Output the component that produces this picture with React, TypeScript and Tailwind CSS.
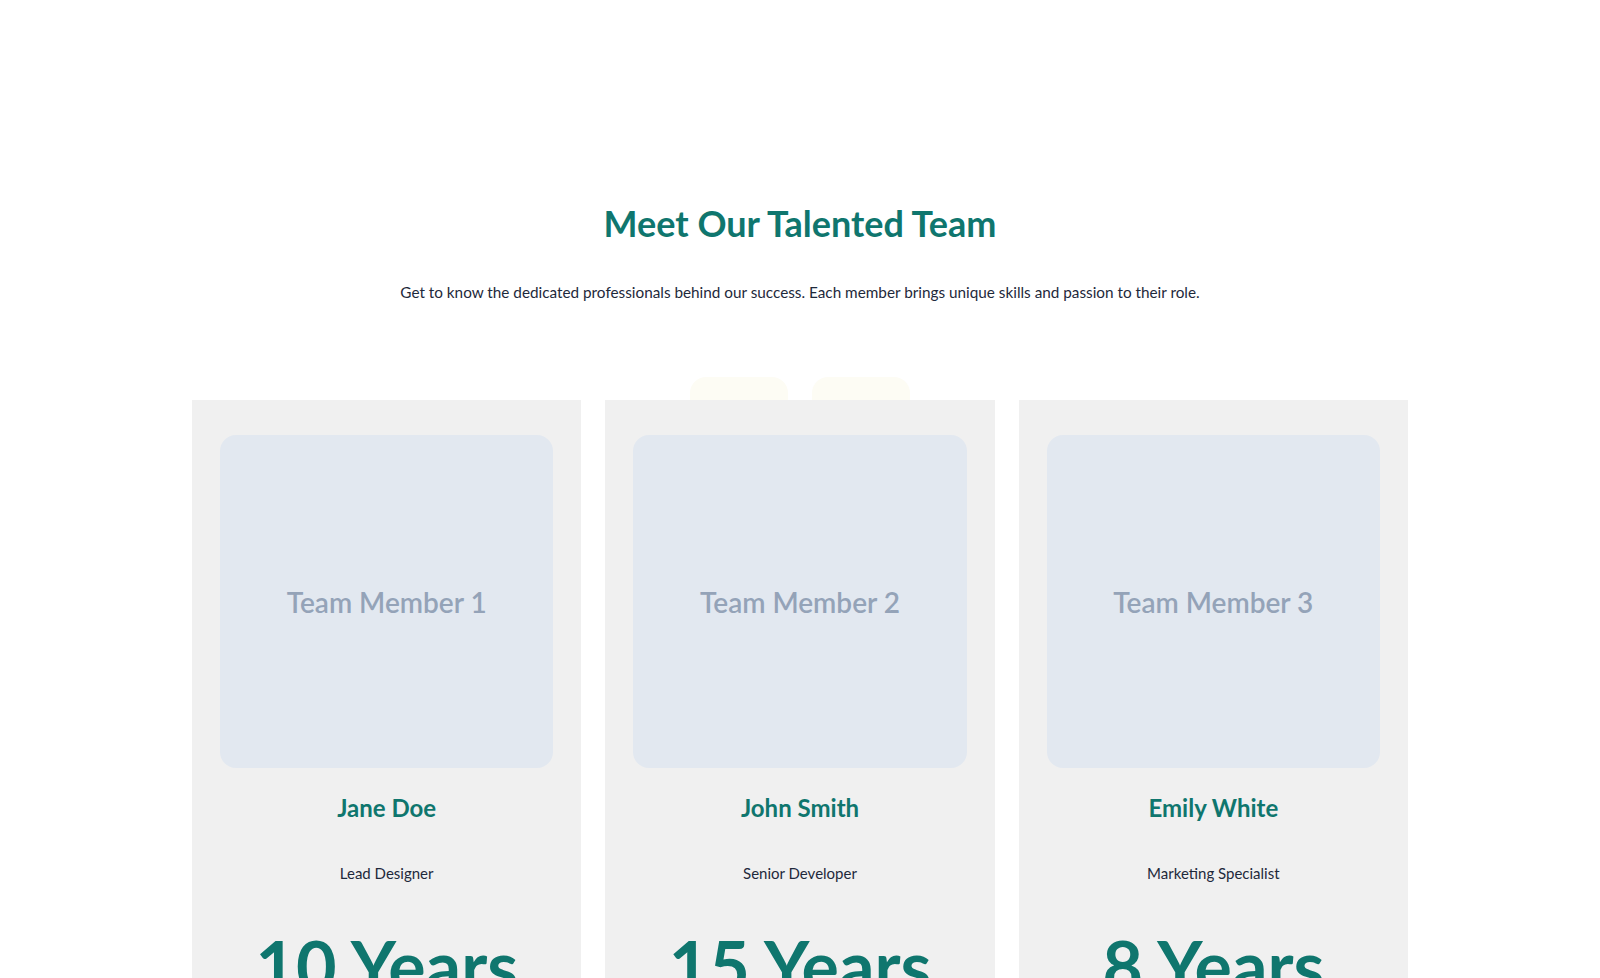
const team = [
  { photo: "Team Member 1", name: "Jane Doe", role: "Lead Designer", years: "10 Years" },
  { photo: "Team Member 2", name: "John Smith", role: "Senior Developer", years: "15 Years" },
  { photo: "Team Member 3", name: "Emily White", role: "Marketing Specialist", years: "8 Years" },
]

const MemberCard = ({ photo, name, role, years }: { photo: string; name: string; role: string; years: string }) => {
  return (
    <div className="bg-[#f0f0f0] px-7 pt-[35px] pb-10 flex flex-col items-center text-center">
      <div className="w-full aspect-square rounded-2xl bg-[#e2e8f0] flex items-center justify-center">
        <span className="text-[28px] font-semibold text-[#94a3b8]">{photo}</span>
      </div>
      <h3 className="mt-6 text-2xl leading-8 font-bold text-[#0f766e]">{name}</h3>
      <p className="mt-[37px] text-[15px] leading-6 text-[#1e293b]">{role}</p>
      <p className="mt-[45px] text-[70px] leading-none font-bold text-[#0f766e]">{years}</p>
    </div>
  )
}

export default function App() {
  return (
    <div className="min-h-screen bg-white font-['Lato',sans-serif]">
      <section className="max-w-7xl mx-auto px-8 pt-[203px] pb-20">
        <div className="text-center">
          <h2 className="text-4xl leading-10 font-bold text-[#0f766e]">Meet Our Talented Team</h2>
          <p className="mt-[37px] text-[15.3px] leading-6 text-[#1e293b]">
            Get to know the dedicated professionals behind our success. Each member brings unique skills and passion to their role.
          </p>
        </div>

        {/* filter pills peeking out above the cards */}
        <div className="mt-[73px] h-[23px] overflow-hidden flex justify-center gap-6">
          <div className="w-[98px] h-12 rounded-2xl bg-[#fdfcf4]" />
          <div className="w-[98px] h-12 rounded-2xl bg-[#fdfcf4]" />
        </div>

        <div className="grid grid-cols-3 gap-6">
          {team.map((m) => (
            <MemberCard key={m.name} {...m} />
          ))}
        </div>
      </section>
    </div>
  )
}
